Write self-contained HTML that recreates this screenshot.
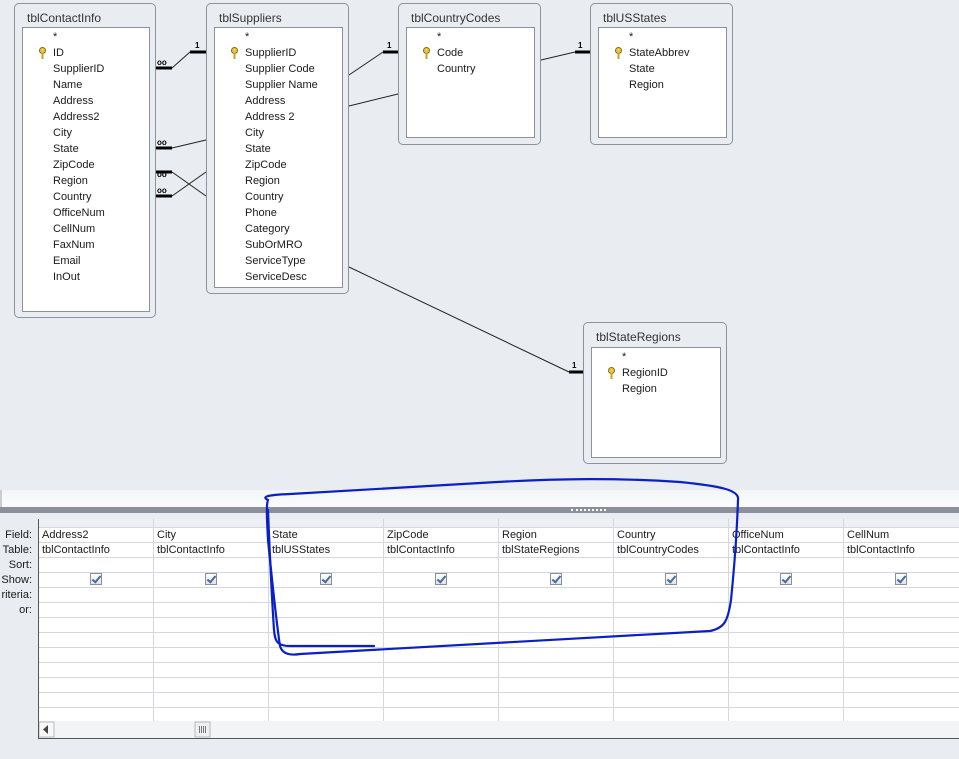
<!DOCTYPE html>
<html><head><meta charset="utf-8"><style>
*{margin:0;padding:0;box-sizing:border-box}
body{width:959px;height:759px;overflow:hidden;background:#e9ecf0;font-family:"Liberation Sans",sans-serif;font-size:11px;color:#1a1a1a;position:relative}
.tb{position:absolute;border:1px solid #8d9299;border-radius:5px;background:#e9ecf0}
.tb .t{position:absolute;left:12px;top:7px;font-size:12px;color:#333}
.tb .in{position:absolute;background:#fff;border:1px solid #8d9299}
.f{position:absolute;left:30px;height:16px;line-height:16px;font-size:11px;white-space:nowrap;margin-top:1px}
.k{position:absolute;left:15px;top:3px}
.a{position:absolute}
.lab{position:absolute;right:927px;width:60px;text-align:right;font-size:11px;line-height:15px;margin-top:1px}
.cell{position:absolute;font-size:11px;line-height:15px;white-space:nowrap;margin-top:1px}
.cb{position:absolute;width:12px;height:12px;border:1px solid #8a8f98;background:linear-gradient(#fff,#dfe3e8)}
.cb:after{content:"";position:absolute;left:3px;top:0px;width:3px;height:7px;border:solid #4a6a9a;border-width:0 2px 2px 0;transform:rotate(40deg)}
</style></head><body>

<svg class="a" style="left:0;top:0" width="959" height="490">
<g stroke="#222" stroke-width="1" fill="none">
<line x1="172" y1="68" x2="190" y2="52"/>
<line x1="172" y1="148" x2="206" y2="140"/>
<line x1="172" y1="172" x2="206" y2="196"/>
<line x1="172" y1="196" x2="206" y2="172"/>
<line x1="349" y1="75" x2="383" y2="52"/>
<line x1="349" y1="106" x2="398" y2="94"/>
<line x1="541" y1="60" x2="575" y2="52"/>
<line x1="349" y1="267" x2="569" y2="372"/>
</g>
<g stroke="#000" stroke-width="3">
<line x1="156" y1="68" x2="172" y2="68"/>
<line x1="156" y1="148" x2="172" y2="148"/>
<line x1="156" y1="172" x2="172" y2="172"/>
<line x1="156" y1="196" x2="172" y2="196"/>
<line x1="190" y1="52" x2="206" y2="52"/>
<line x1="383" y1="52" x2="398" y2="52"/>
<line x1="575" y1="52" x2="590" y2="52"/>
<line x1="569" y1="372" x2="583" y2="372"/>
</g>
<g font-family="Liberation Sans" font-size="8" font-weight="bold" fill="#000">
<text x="157" y="65">oo</text><text x="157" y="145">oo</text><text x="157" y="177">oo</text><text x="157" y="193">oo</text>
<text x="195" y="48">1</text><text x="387" y="48">1</text><text x="578" y="48">1</text><text x="572" y="368">1</text>
</g>
</svg>

<div class="tb" style="left:14px;top:3px;width:142px;height:315px"><div class="t">tblContactInfo</div>
<div class="in" style="left:7px;top:23px;width:128px;height:285px">
<div class="f" style="top:0">*</div>
<div class="f" style="top:16px">ID</div><svg class="k" style="top:19px" width="9" height="12"><circle cx="4.5" cy="3.5" r="3" fill="#e8c84a" stroke="#8a6a10"/><rect x="3.5" y="6" width="2" height="6" fill="#c9a020"/></svg>
<div class="f" style="top:32px">SupplierID</div><div class="f" style="top:48px">Name</div><div class="f" style="top:64px">Address</div><div class="f" style="top:80px">Address2</div><div class="f" style="top:96px">City</div><div class="f" style="top:112px">State</div><div class="f" style="top:128px">ZipCode</div><div class="f" style="top:144px">Region</div><div class="f" style="top:160px">Country</div><div class="f" style="top:176px">OfficeNum</div><div class="f" style="top:192px">CellNum</div><div class="f" style="top:208px">FaxNum</div><div class="f" style="top:224px">Email</div><div class="f" style="top:240px">InOut</div>
</div></div>

<div class="tb" style="left:206px;top:3px;width:143px;height:291px"><div class="t">tblSuppliers</div>
<div class="in" style="left:7px;top:23px;width:129px;height:261px">
<div class="f" style="top:0">*</div>
<div class="f" style="top:16px">SupplierID</div><svg class="k" style="top:19px" width="9" height="12"><circle cx="4.5" cy="3.5" r="3" fill="#e8c84a" stroke="#8a6a10"/><rect x="3.5" y="6" width="2" height="6" fill="#c9a020"/></svg>
<div class="f" style="top:32px">Supplier Code</div><div class="f" style="top:48px">Supplier Name</div><div class="f" style="top:64px">Address</div><div class="f" style="top:80px">Address 2</div><div class="f" style="top:96px">City</div><div class="f" style="top:112px">State</div><div class="f" style="top:128px">ZipCode</div><div class="f" style="top:144px">Region</div><div class="f" style="top:160px">Country</div><div class="f" style="top:176px">Phone</div><div class="f" style="top:192px">Category</div><div class="f" style="top:208px">SubOrMRO</div><div class="f" style="top:224px">ServiceType</div><div class="f" style="top:240px">ServiceDesc</div>
</div></div>

<div class="tb" style="left:398px;top:3px;width:143px;height:142px"><div class="t">tblCountryCodes</div>
<div class="in" style="left:7px;top:23px;width:129px;height:111px">
<div class="f" style="top:0">*</div>
<div class="f" style="top:16px">Code</div><svg class="k" style="top:19px" width="9" height="12"><circle cx="4.5" cy="3.5" r="3" fill="#e8c84a" stroke="#8a6a10"/><rect x="3.5" y="6" width="2" height="6" fill="#c9a020"/></svg>
<div class="f" style="top:32px">Country</div>
</div></div>

<div class="tb" style="left:590px;top:3px;width:143px;height:142px"><div class="t">tblUSStates</div>
<div class="in" style="left:7px;top:23px;width:129px;height:111px">
<div class="f" style="top:0">*</div>
<div class="f" style="top:16px">StateAbbrev</div><svg class="k" style="top:19px" width="9" height="12"><circle cx="4.5" cy="3.5" r="3" fill="#e8c84a" stroke="#8a6a10"/><rect x="3.5" y="6" width="2" height="6" fill="#c9a020"/></svg>
<div class="f" style="top:32px">State</div><div class="f" style="top:48px">Region</div>
</div></div>

<div class="tb" style="left:583px;top:322px;width:144px;height:142px"><div class="t">tblStateRegions</div>
<div class="in" style="left:7px;top:24px;width:130px;height:111px">
<div class="f" style="top:0">*</div>
<div class="f" style="top:16px">RegionID</div><svg class="k" style="top:19px" width="9" height="12"><circle cx="4.5" cy="3.5" r="3" fill="#e8c84a" stroke="#8a6a10"/><rect x="3.5" y="6" width="2" height="6" fill="#c9a020"/></svg>
<div class="f" style="top:32px">Region</div>
</div></div>

<div class="a" style="left:0;top:490px;width:959px;height:17px;background:linear-gradient(#f4f5f7,#fcfcfd);border-left:2px solid #ccc"></div>
<div class="a" style="left:0;top:507px;width:959px;height:6px;background:#8b909c"></div>
<div class="a" style="left:571px;top:509px;width:35px;height:2px;border-top:2px dotted #fff"></div>

<svg class="a" style="left:38px;top:519px" width="921" height="220">
<rect x="0" y="0" width="921" height="220" fill="#fff"/>
<rect x="0" y="0" width="921" height="8" fill="#eef0f3"/>
<g stroke="#d4d7dd" stroke-width="1">
<line x1="0" y1="8.5" x2="921" y2="8.5"/>
<line x1="0" y1="23.5" x2="921" y2="23.5"/><line x1="0" y1="38.5" x2="921" y2="38.5"/><line x1="0" y1="53.5" x2="921" y2="53.5"/><line x1="0" y1="68.5" x2="921" y2="68.5"/><line x1="0" y1="83.5" x2="921" y2="83.5"/><line x1="0" y1="98.5" x2="921" y2="98.5"/><line x1="0" y1="113.5" x2="921" y2="113.5"/><line x1="0" y1="128.5" x2="921" y2="128.5"/><line x1="0" y1="143.5" x2="921" y2="143.5"/><line x1="0" y1="158.5" x2="921" y2="158.5"/><line x1="0" y1="173.5" x2="921" y2="173.5"/><line x1="0" y1="188.5" x2="921" y2="188.5"/>
<line x1="115.5" y1="0" x2="115.5" y2="202"/><line x1="230.5" y1="0" x2="230.5" y2="202"/><line x1="345.5" y1="0" x2="345.5" y2="202"/><line x1="460.5" y1="0" x2="460.5" y2="202"/><line x1="575.5" y1="0" x2="575.5" y2="202"/><line x1="690.5" y1="0" x2="690.5" y2="202"/><line x1="805.5" y1="0" x2="805.5" y2="202"/>
</g>
<rect x="0" y="202" width="921" height="17" fill="#f3f4f6"/>
<rect x="1" y="203" width="15" height="15" fill="#f8f8f8" stroke="#b5b8bd"/>
<path d="M5 210.5 L10 206 L10 215 Z" fill="#444"/>
<rect x="157" y="203" width="15" height="15" fill="#f0f0f0" stroke="#b5b8bd"/>
<g stroke="#777"><line x1="161.5" y1="207" x2="161.5" y2="214"/><line x1="163.5" y1="207" x2="163.5" y2="214"/><line x1="165.5" y1="207" x2="165.5" y2="214"/><line x1="167.5" y1="207" x2="167.5" y2="214"/></g>
<path d="M0.5 0 V219.5 H921" stroke="#555" fill="none"/>
</svg>

<div class="lab" style="top:527px">Field:</div>
<div class="lab" style="top:542px">Table:</div>
<div class="lab" style="top:557px">Sort:</div>
<div class="lab" style="top:572px">Show:</div>
<div class="lab" style="top:587px">riteria:</div>
<div class="lab" style="top:602px">or:</div>

<div class="cell" style="left:42px;top:527px">Address2</div><div class="cell" style="left:42px;top:542px">tblContactInfo</div>
<div class="cell" style="left:157px;top:527px">City</div><div class="cell" style="left:157px;top:542px">tblContactInfo</div>
<div class="cell" style="left:272px;top:527px">State</div><div class="cell" style="left:272px;top:542px">tblUSStates</div>
<div class="cell" style="left:387px;top:527px">ZipCode</div><div class="cell" style="left:387px;top:542px">tblContactInfo</div>
<div class="cell" style="left:502px;top:527px">Region</div><div class="cell" style="left:502px;top:542px">tblStateRegions</div>
<div class="cell" style="left:617px;top:527px">Country</div><div class="cell" style="left:617px;top:542px">tblCountryCodes</div>
<div class="cell" style="left:732px;top:527px">OfficeNum</div><div class="cell" style="left:732px;top:542px">tblContactInfo</div>
<div class="cell" style="left:847px;top:527px">CellNum</div><div class="cell" style="left:847px;top:542px">tblContactInfo</div>

<div class="cb" style="left:90px;top:573px"></div><div class="cb" style="left:205px;top:573px"></div><div class="cb" style="left:320px;top:573px"></div><div class="cb" style="left:435px;top:573px"></div><div class="cb" style="left:550px;top:573px"></div><div class="cb" style="left:665px;top:573px"></div><div class="cb" style="left:780px;top:573px"></div><div class="cb" style="left:895px;top:573px"></div>

<svg class="a" style="left:0;top:0" width="959" height="759">
<g stroke="#0a1fc8" stroke-width="2.2" fill="none" stroke-linecap="round" stroke-linejoin="round">
<path d="M268 500 C262 497 265 495 290 494 C360 490 420 486 480 483 C560 478 620 478 680 482 C720 486 740 490 738 500 C737 530 735 560 731 600 C728 620 725 628 710 631 C600 638 450 645 300 654 C288 656 282 653 280 646 C276 620 272 580 268 540 C267 520 266 505 268 500"/>
<path d="M268 510 C270 560 272 600 274 630 C275 640 276 646 290 646 L374 646"/>
</g>
</svg>
</body></html>
